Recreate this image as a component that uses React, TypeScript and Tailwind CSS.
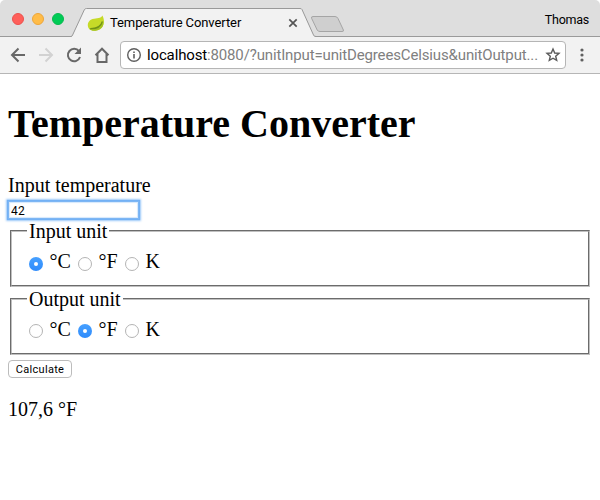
import { useState } from "react";

const units = ["°C", "°F", "K"];

function Radio({ checked, onSelect }: { checked: boolean; onSelect: () => void }) {
  return (
    <button
      type="button"
      role="radio"
      aria-checked={checked}
      onClick={onSelect}
      className={
        checked
          ? "flex size-[14px] shrink-0 items-center justify-center rounded-full bg-linear-to-b from-[#46a0ff] to-[#2f8bfb]"
          : "flex size-[14px] shrink-0 items-center justify-center rounded-full border border-[#b4b4b4] bg-white"
      }
    >
      {checked && <span className="size-[4px] rounded-full bg-white" />}
    </button>
  );
}

function UnitGroup({ title, initial, radioOffset }: { title: string; initial: number; radioOffset: string }) {
  const [selected, setSelected] = useState(initial);
  return (
    <fieldset className="mx-[2px] h-[68px] min-w-0 border-2 border-[#c0c0c0] [border-style:groove] pl-[15px]">
      <legend className="h-[23px] px-[2px] leading-[25px]">{title}</legend>
      <div className="flex pt-[8px] pl-[2px] leading-[23px]" role="radiogroup">
        {units.map((unit, i) => (
          <label key={unit} className={i === 2 ? "flex gap-[7px]" : i === 1 ? "flex w-[47px] gap-[7px]" : "flex w-[49px] gap-[7px]"}>
            <span className={radioOffset}>
              <Radio checked={selected === i} onSelect={() => setSelected(i)} />
            </span>
            <span className="-ml-[0.5px]">{unit}</span>
          </label>
        ))}
      </div>
    </fieldset>
  );
}

function TabStrip() {
  return (
    <div className="relative flex h-[37px] rounded-t-[5px] border-b border-[#9a9a9a] bg-[#dedede]">
      <div className="flex gap-[8px] pt-[13px] pl-[12px]">
        <span className="size-[12px] rounded-full border border-[#ec514d] bg-[#ff5f5a]" />
        <span className="size-[12px] rounded-full border border-[#eda63a] bg-[#ffbc48]" />
        <span className="size-[12px] rounded-full border border-[#09b94e] bg-[#00cb56]" />
      </div>
      <svg className="absolute top-0 left-0" width="360" height="37" viewBox="0 0 360 37">
        <path d="M71 37 L72.5 35.5 L84.5 9.5 Q85 8.5 86.5 8.5 H300 Q301.5 8.5 302 9.5 L313.5 35 Q314 36.5 315.5 36.5 V37 Z" fill="#f2f2f2" />
        <path d="M71 36.5 Q72 36.5 72.6 35 L84.3 9.8 Q85 8.5 86.5 8.5 H300 Q301.5 8.5 302 9.5 L313.5 35 Q314 36.5 316 36.5" fill="none" stroke="#999" />
        <path d="M313 16.5 H335 Q337 16.5 338 18.5 L343.4 30 Q344 31.5 342 31.5 H320 Q318 31.5 317.2 30 L311.6 18.3 Q311 16.5 313 16.5 Z" fill="#cfcfcf" stroke="#a5a5a5" />
        <path d="M289.3 19.3 L296.7 26.7 M296.7 19.3 L289.3 26.7" stroke="#555" strokeWidth="1.7" />
        <path d="M102.4 15.4 C101 18.6 97 17.6 92.5 19 C87.5 20.6 86.8 25.5 89 28.8 C91 31 97 31.4 100.5 29 C104.6 26 104.8 19.5 102.4 15.4 Z" fill="#c6da28" />
        <path d="M103.2 20.5 C101.8 25.5 96.5 28.2 90 28 L89.4 29 C90.5 30.6 93 31 95.5 30.7 C101 30 104.6 26 103.2 20.5 Z" fill="#a5c322" />
        <path d="M90.3 28.7 C96.5 28.8 101 26.5 102.4 21.5" fill="none" stroke="#719217" strokeWidth="1.3" />
      </svg>
      <span className="absolute top-[14px] left-[110px] font-['Roboto',sans-serif] text-[13px] leading-[18px] tracking-[-0.09px] whitespace-nowrap">
        Temperature Converter
      </span>
      <span className="mt-[11px] mr-[11px] ml-auto font-['Roboto',sans-serif] text-[12.5px] leading-[18px] tracking-[-0.25px]">Thomas</span>
    </div>
  );
}

function Toolbar() {
  return (
    <div className="flex h-[37px] border-b border-[#b6b6b6] bg-[#f2f2f2]">
      <svg className="shrink-0" width="120" height="36" viewBox="0 37 120 36" fill="none" strokeWidth="2">
        <path d="M25 55 H12 M18.5 48.5 L12 55 L18.5 61.5" stroke="#686868" />
        <path d="M39 55 H52 M45.5 48.5 L52 55 L45.5 61.5" stroke="#d2d2d2" />
        <path d="M79 51.2 A6.2 6.2 0 1 0 80 57" stroke="#686868" />
        <path d="M81 47.5 V54 H74.5 Z" fill="#686868" />
        <path d="M95.5 55.2 L102 48.7 L108.5 55.2 M97.5 54 V62 H106.5 V54" stroke="#686868" />
      </svg>
      <div className="mt-[4px] flex h-[28px] w-[446px] items-center rounded-[4px] border border-[#b5b5b5] bg-white">
        <svg className="ml-[6px] shrink-0" width="14" height="14" viewBox="0 0 14 14" fill="none" stroke="#5f5f5f">
          <circle cx="7" cy="7" r="6.3" strokeWidth="1.4" />
          <path d="M7 6 V10.5 M7 3.5 V5" strokeWidth="1.6" />
        </svg>
        <span className="ml-[6px] w-[392px] font-['Roboto',sans-serif] text-[15px] leading-[20px] tracking-[-0.145px] whitespace-nowrap text-[#808080]">
          <span className="text-black">localhost</span>:8080/?unitInput=unitDegreesCelsius&amp;unitOutput...
        </span>
        <svg className="ml-[6px] shrink-0" width="16" height="16" viewBox="0 0 16 16" fill="none" stroke="#5b5b5b" strokeWidth="1.4">
          <path d="M8 2 L9.7 6 L14 6.4 L10.7 9.2 L11.7 13.4 L8 11.2 L4.3 13.4 L5.3 9.2 L2 6.4 L6.3 6 Z" />
        </svg>
      </div>
      <svg className="ml-[13px]" width="6" height="36" viewBox="0 0 6 36" fill="#606060">
        <circle cx="3" cy="13" r="1.6" />
        <circle cx="3" cy="18" r="1.6" />
        <circle cx="3" cy="23" r="1.6" />
      </svg>
    </div>
  );
}

export default function App() {
  const [value, setValue] = useState("42");
  return (
    <div className="h-[500px] w-[600px] overflow-hidden bg-white text-black">
      <TabStrip />
      <Toolbar />
      <main className="px-[8px] pt-[26px] font-['Liberation_Serif',serif] text-[20px] leading-[23px]">
        <h1 className="text-[40px] leading-[48px] font-bold tracking-[-0.01px] whitespace-nowrap">Temperature Converter</h1>
        <div className="mt-[26px]">Input temperature</div>
        <input
          value={value}
          onChange={(e) => setValue(e.target.value)}
          className="mt-[4px] block h-[18px] w-[131px] border border-[#7db6f4] bg-white px-[2px] pt-px font-['Roboto',sans-serif] text-[12px] leading-[14px] tracking-[0.2px] shadow-[0_0_1px_1px_#73b1f5,0_0_2px_2px_#a9d0fa,inset_0_0_1px_1px_#d5e8fc] outline-none"
        />
        <div className="flex flex-col">
          <UnitGroup title="Input unit" initial={0} radioOffset="pt-[7px]" />
          <UnitGroup title="Output unit" initial={1} radioOffset="pt-[6px]" />
        </div>
        <button className="mt-[5px] block h-[18px] w-[64px] rounded-[4px] border border-[#bcbcbc] bg-white font-['Roboto',sans-serif] text-[11px] leading-[15px] tracking-[0.3px]">
          Calculate
        </button>
        <p className="mt-[20px]">107,6 °F</p>
      </main>
    </div>
  );
}
